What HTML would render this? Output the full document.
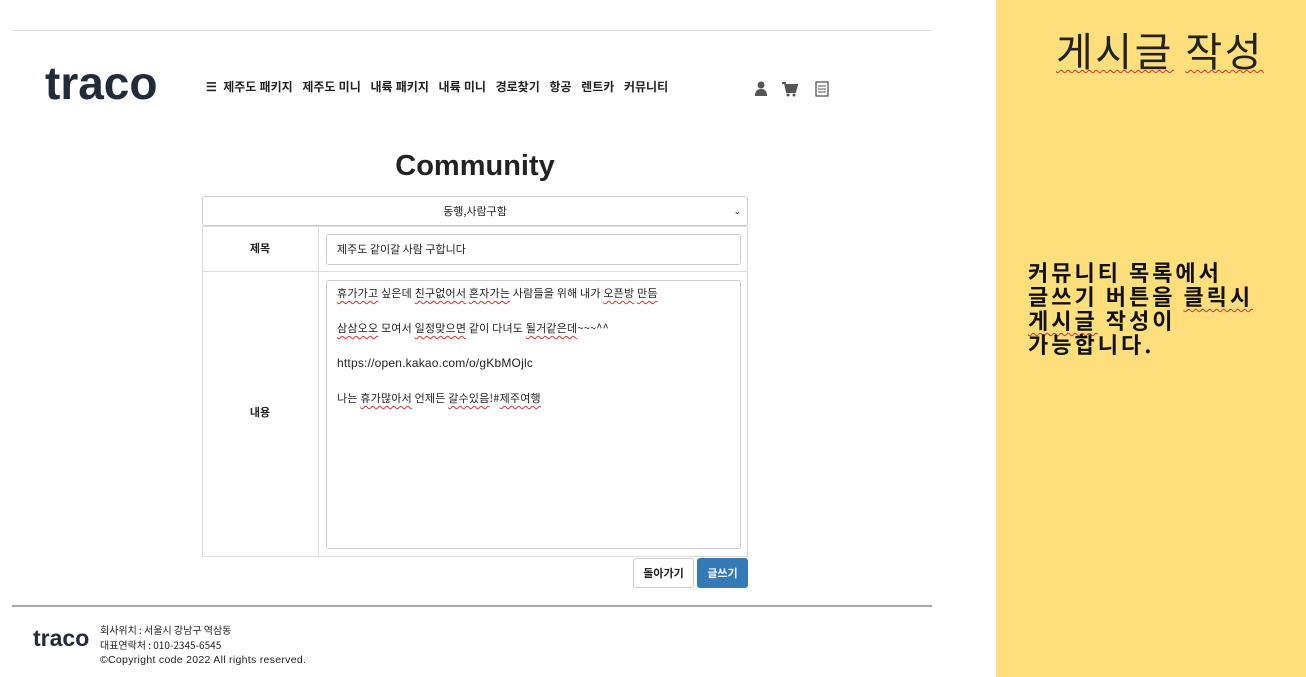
<!DOCTYPE html>
<html><head><meta charset="utf-8"><style>
*{box-sizing:border-box;margin:0;padding:0}
body{width:1306px;height:677px;background:#fff;position:relative;overflow:hidden;font-family:"Liberation Sans","Noto Sans CJK KR",sans-serif;color:#222}
.a{position:absolute}
.k{font-family:"Noto Sans CJK KR","Liberation Sans",sans-serif}
.sq{text-decoration:underline wavy #d33;text-decoration-thickness:1px;text-underline-offset:3px}
</style></head><body>
<div class="a" style="left:12px;top:30px;width:920px;height:1px;background:#ddd"></div>
<div class="a" style="left:45px;top:57px;font-size:46px;font-weight:bold;color:#222b38;letter-spacing:0px;line-height:52px">traco</div>
<div class="a k" style="left:206px;top:78px;font-size:12px;font-weight:bold;color:#222;white-space:nowrap;line-height:18px;word-spacing:0.5px">☰&nbsp; 제주도 패키지&nbsp;&nbsp; 제주도 미니&nbsp;&nbsp; 내륙 패키지&nbsp;&nbsp; 내륙 미니&nbsp;&nbsp; 경로찾기&nbsp;&nbsp; 항공&nbsp;&nbsp; 렌트카&nbsp;&nbsp; 커뮤니티</div>
<svg class="a" style="left:754px;top:80px" width="80" height="18" viewBox="0 0 80 18">
<circle cx="7" cy="5" r="3.5" fill="#555"/><path d="M1 16 Q1 9 7 9 Q13 9 13 16Z" fill="#555"/>
<path d="M28 3 H31 L33 12 H41 L43 5 H32" stroke="#555" stroke-width="2" fill="#555"/><circle cx="34" cy="15" r="1.5" fill="#555"/><circle cx="40" cy="15" r="1.5" fill="#555"/>
<rect x="62" y="2" width="12" height="14" fill="none" stroke="#555" stroke-width="1.3"/><path d="M64 6h8M64 9h8M64 12h8" stroke="#555" stroke-width="1"/>
</svg>
<div class="a" style="left:0;top:150px;width:950px;text-align:center;font-size:29px;font-weight:bold;color:#222">Community</div>
<div class="a k" style="left:202px;top:196px;width:546px;height:30px;border:1px solid #ccc;border-radius:3px;font-size:11px;text-align:center;line-height:28px">동행,사람구함<span style="position:absolute;right:6px;font-size:9px">⌄</span></div>
<div class="a" style="left:202px;top:226px;width:546px;height:331px;border:1px solid #ddd"></div>
<div class="a" style="left:318px;top:226px;width:1px;height:331px;background:#ddd"></div>
<div class="a" style="left:202px;top:271px;width:546px;height:1px;background:#ddd"></div>
<div class="a k" style="left:202px;top:240px;width:116px;text-align:center;font-size:11px;font-weight:bold">제목</div>
<div class="a k" style="left:202px;top:404px;width:116px;text-align:center;font-size:11px;font-weight:bold">내용</div>
<div class="a k" style="left:326px;top:234px;width:415px;height:31px;border:1px solid #ccc;border-radius:3px;font-size:11px;padding-left:10px;line-height:29px">제주도 같이갈 사람 구합니다</div>
<div class="a k" style="left:326px;top:280px;width:415px;height:269px;border:1px solid #ccc;border-radius:3px;font-size:11px;padding:4px 10px;line-height:17.5px;letter-spacing:0.2px">
<div><span class="sq">휴가가고</span> 싶은데 <span class="sq">친구없어서</span> <span class="sq">혼자가는</span> 사람들을 위해 내가 <span class="sq">오픈방</span> <span class="sq">만듬</span></div><br>
<div><span class="sq">삼삼오오</span> 모여서 <span class="sq">일정맞으면</span> 같이 다녀도 <span class="sq">될거같은데</span>~~~^^</div><br>
<div style="font-family:'Liberation Sans',sans-serif;font-size:12px">https://open.kakao.com/o/gKbMOjlc</div><br>
<div>나는 <span class="sq">휴가많아서</span> 언제든 <span class="sq">갈수있음</span>!#<span class="sq">제주여행</span></div>
</div>
<div class="a k" style="left:633px;top:558px;width:61px;height:30px;border:1px solid #ccc;border-radius:3px;font-size:11px;font-weight:bold;text-align:center;line-height:28px">돌아가기</div>
<div class="a k" style="left:697px;top:558px;width:51px;height:30px;background:#337ab7;border-radius:3px;color:#fff;font-size:11px;font-weight:bold;text-align:center;line-height:30px">글쓰기</div>
<div class="a" style="left:12px;top:605px;width:920px;height:2px;background:#aaa"></div>
<div class="a" style="left:33px;top:625px;font-size:23px;font-weight:bold;color:#222b38">traco</div>
<div class="a k" style="left:100px;top:623px;font-size:10px;line-height:14.5px;color:#222">회사위치 : 서울시 강남구 역삼동<br>대표연락처 : 010-2345-6545<br><span style="font-family:'Liberation Sans',sans-serif;font-size:10.5px;letter-spacing:0.3px">©Copyright code 2022 All rights reserved.</span></div>
<div class="a" style="left:996px;top:0;width:310px;height:677px;background:#ffdf7b"></div>
<div class="a k" style="left:1056px;top:22px;font-size:40px;color:#222;line-height:54px;letter-spacing:2.5px"><span class="sq">게시글</span> <span class="sq">작성</span></div>
<div class="a k" style="left:1028px;top:260px;font-size:22px;font-weight:bold;color:#111;line-height:24px;letter-spacing:3px">커뮤니티 목록에서<br>글쓰기 버튼을 <span class="sq">클릭시</span><br><span class="sq">게시글</span> 작성이<br>가능합니다.</div>
</body></html>
